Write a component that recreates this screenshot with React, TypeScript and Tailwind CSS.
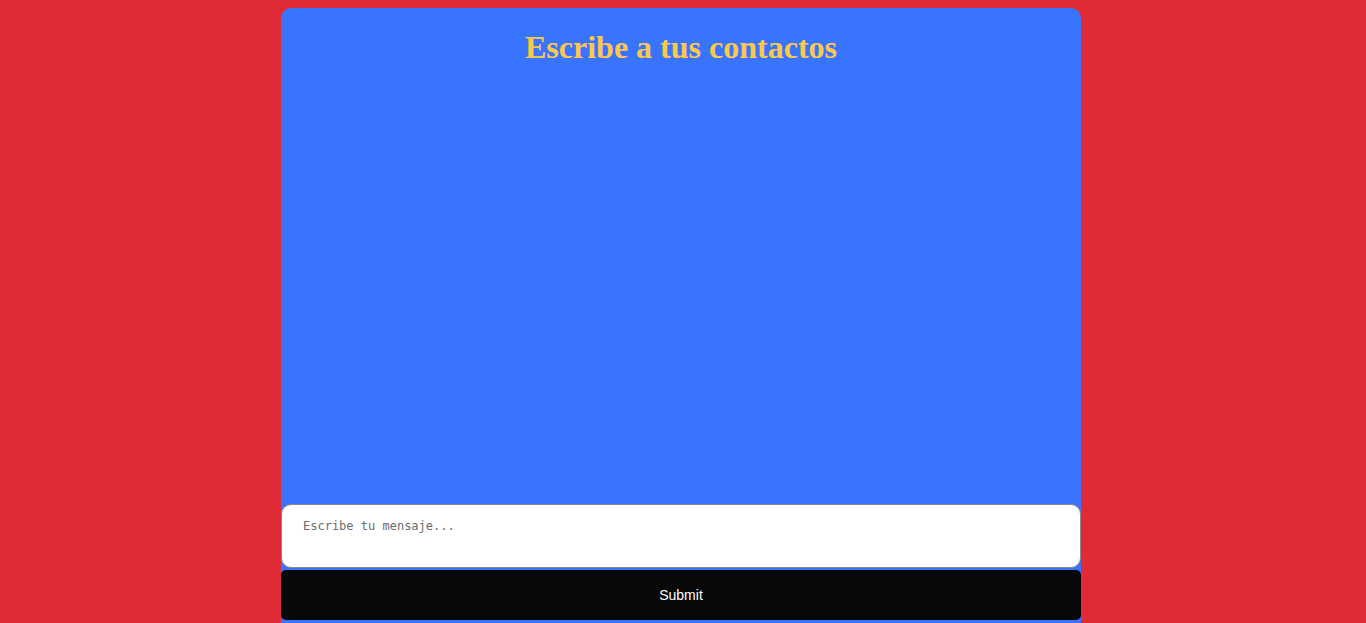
export default function App() {
  return (
    <div className="min-h-screen bg-[#e02a36] pr-[4px] pt-2">
      <div className="mx-auto flex w-[800px] flex-col rounded-[10px] bg-[#3874fe] pb-4">
        <h1 className="pt-[21px] text-center font-['Liberation_Serif',serif] text-[32px] font-bold leading-[37px] text-[#fcc84c]">
          Escribe a tus contactos
        </h1>
        {/* messages area */}
        <div className="h-[438px]" />
        <textarea
          placeholder="Escribe tu mensaje..."
          className="h-[64px] w-full resize-none rounded-[10px] border border-[#8a8a8a] bg-white px-[21px] py-[14px] font-['DejaVu_Sans_Mono',monospace] text-[12px] leading-[15px] text-black outline-none placeholder:text-[#6b6b6b]"
        />
        <button className="mt-[2px] h-[50px] w-full rounded-[5px] bg-[#080808] font-['Liberation_Sans',sans-serif] text-[14px] text-white">
          Submit
        </button>
      </div>
    </div>
  );
}
